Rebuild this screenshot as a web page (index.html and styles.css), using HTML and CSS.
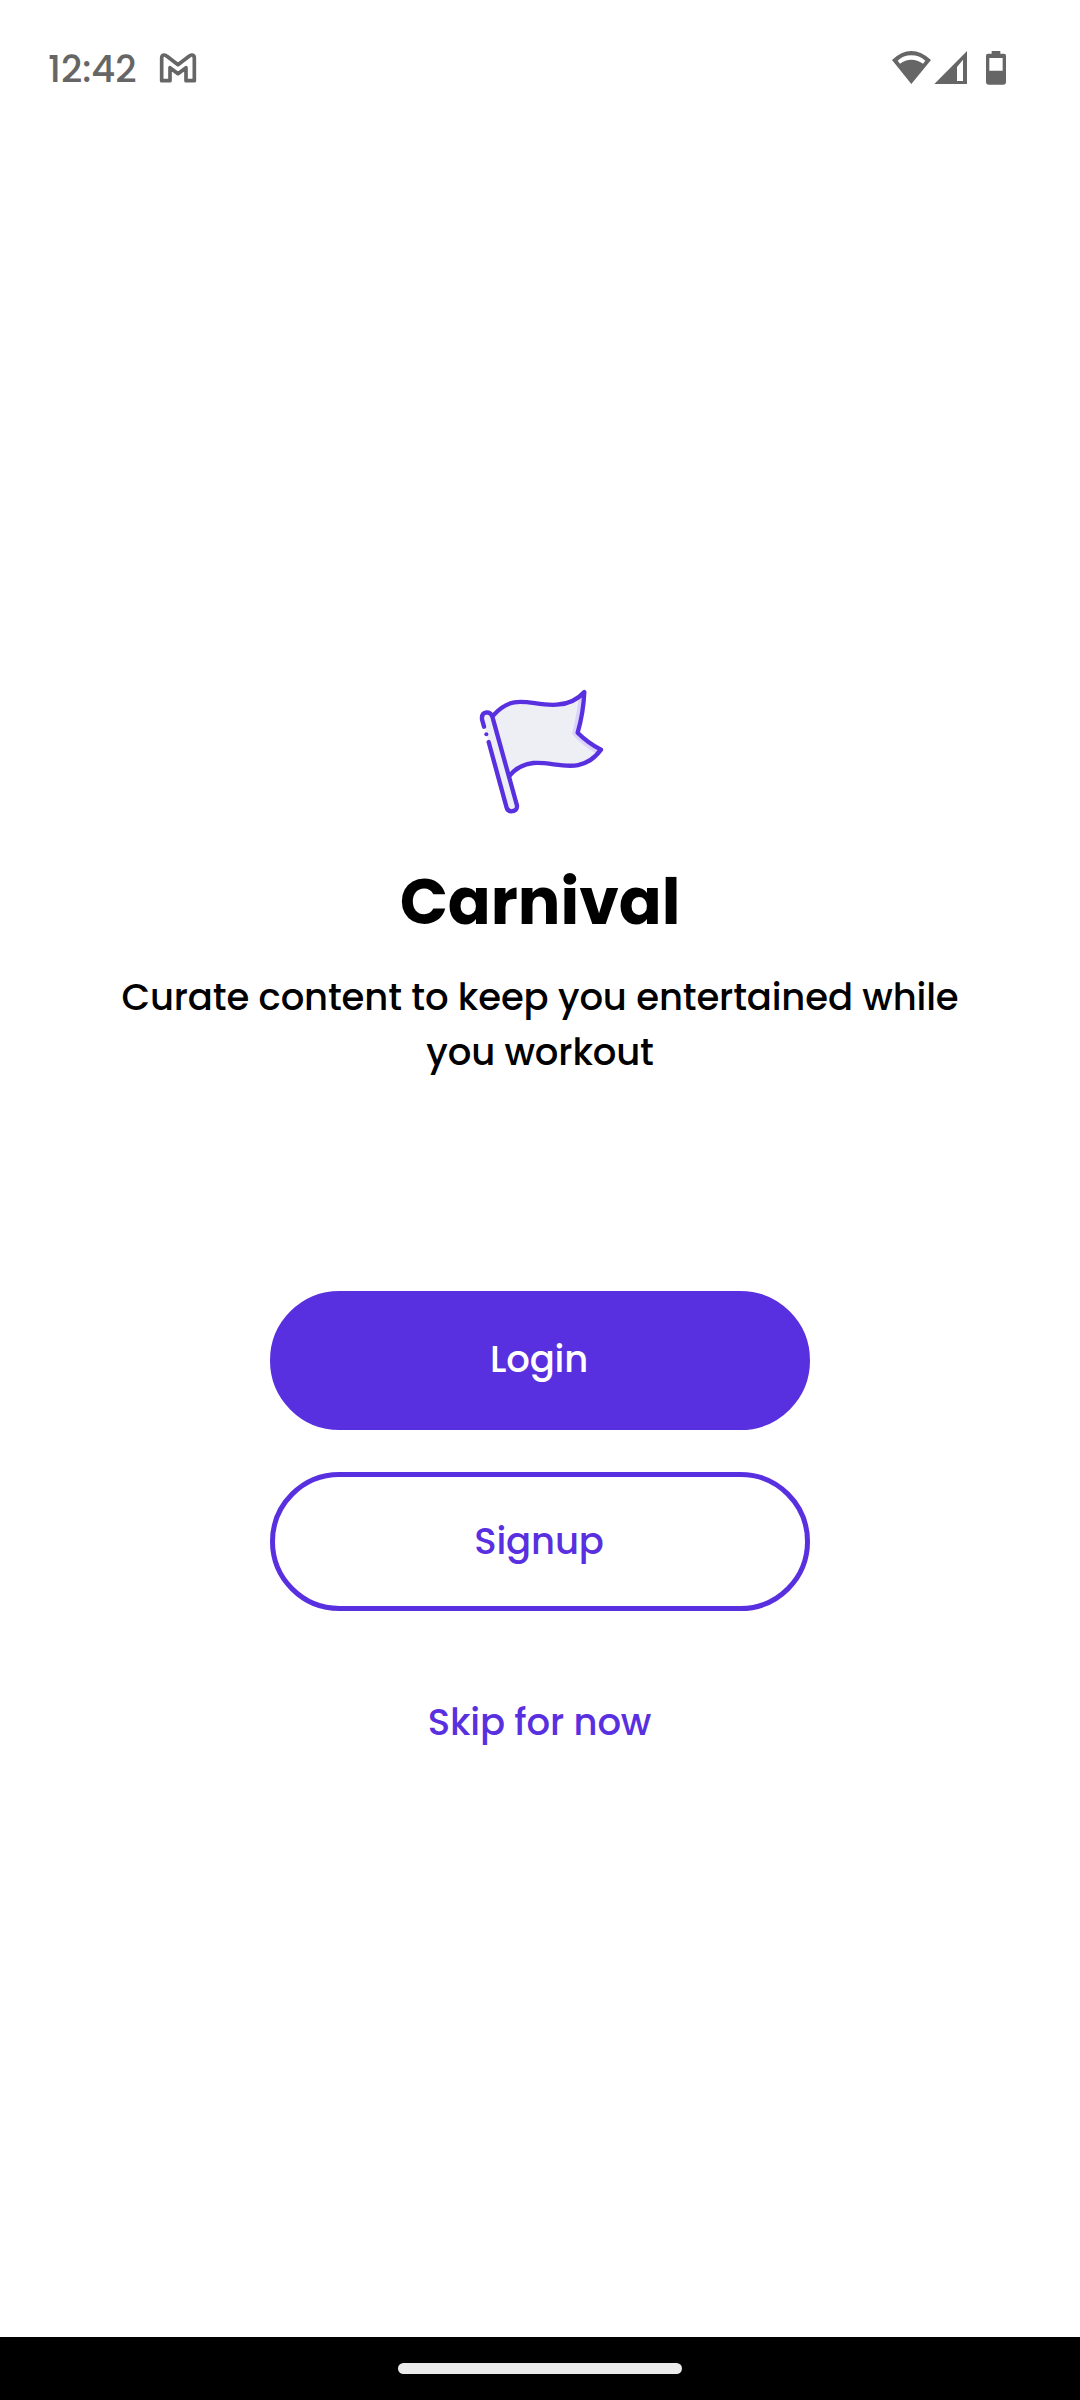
FILE: index.html
```html
<!DOCTYPE html>
<html lang="en">
<head>
<meta charset="utf-8">
<title>Carnival</title>
<link rel="stylesheet" href="styles.css">
</head>
<body>
<div class="screen">
  <header class="status">
    <div class="status-left">
      <span class="clock">12:42</span>
      <svg class="mail" viewBox="0 0 120 96" aria-hidden="true">
        <path d="M11 86V18Q11 9 19 9Q23 9 27 13L60 38L93 13Q97 9 101 9Q109 9 109 18V86H84V47L60 65L36 47V86Z"/>
      </svg>
    </div>
    <svg class="indicators" viewBox="0 0 420 180" aria-hidden="true">
      <path fill-rule="evenodd" d="M36 60Q64 33 94 33T153 60L94 132ZM53 62L60 71Q76 59 94 59T129 71L136 62Q118 46 94 46T53 62Z"/>
      <path fill-rule="evenodd" d="M163 132L261 33V132ZM231 81V123H249V59Z"/>
      <path fill-rule="evenodd" d="M335 33H361V41H372Q378 41 378 47V127Q378 134 371 134H325Q318 134 318 127V47Q318 41 324 41H335ZM328 54V92H368V54Z"/>
    </svg>
  </header>
  <main class="welcome">
    <svg class="flag" viewBox="0 0 480 480" aria-hidden="true">
      <path class="flag-fill" d="M101 135C164 65 215 110 290 104Q341 102 373 66Q370 130 353 188Q384 219 423 239C362 321 288 273 220 279Q175 284 149 317L171 405Q173 424 153 424Q141 424 138 408L66 145Q66 126 81 127Q94 127 97 140Z"/>
      <path class="flag-shade" d="M364 80Q356 140 344 190Q371 222 414 245"/>
      <path class="flag-line" d="M101 135C164 65 215 110 290 104Q341 102 373 66Q370 130 353 188Q384 219 423 239C362 321 288 273 220 279Q175 284 149 317"/>
      <path class="flag-line" d="M72 170L66 148Q64 129 80 127Q93 127 97 140L171 407Q172 424 153 424Q142 423 139 410L86 216"/>
      <circle class="flag-dot" cx="79" cy="193" r="6"/>
    </svg>
    <h1 class="title">Carnival</h1>
    <p class="tagline">Curate content to keep you entertained while<br>you workout</p>
    <div class="actions">
      <button class="button login">Login</button>
      <button class="button signup">Signup</button>
      <a class="skip">Skip for now</a>
    </div>
  </main>
  <footer class="navbar"><div class="handle"></div></footer>
</div>
</body>
</html>
```
FILE: styles.css
```css
* { box-sizing: border-box; }
body { margin: 0; background: #fff; font-family: Poppins, Inter, sans-serif; }
.screen { display: flex; flex-direction: column; width: 1080px; height: 2400px; }
.status { display: flex; justify-content: space-between; height: 100px; padding: 39px 60px 0 48px; }
.status-left { display: flex; }
.clock { width: 110px; font: 500 37px/60px "Google Sans", Poppins, sans-serif; color: #666; white-space: nowrap; }
.mail { width: 40px; height: 32px; margin-top: 13px; fill: none; stroke: #666; stroke-width: 11; stroke-linejoin: round; }
.indicators { width: 140px; height: 60px; margin-top: 1px; fill: #666; }
.welcome { display: flex; flex: 1; flex-direction: column; align-items: center; padding-top: 570px; }
.flag { width: 160px; height: 160px; }
.flag-fill { fill: #eeeff5; }
.flag-shade { fill: none; stroke: #dcd3fb; stroke-width: 14; }
.flag-line { fill: none; stroke: #5930df; stroke-width: 13; stroke-linecap: round; stroke-linejoin: round; }
.flag-dot { fill: #5930df; }
.title { margin: 32px 0 0; font-size: 63.25px; font-weight: 700; line-height: 80px; }
.tagline { margin: 28px 0 0; font-size: 37px; font-weight: 500; line-height: 55px; letter-spacing: -0.14px; text-align: center; white-space: nowrap; }
.actions { display: flex; flex-direction: column; align-items: center; margin-top: 211px; }
.button { width: 540px; height: 139px; border: 5.5px solid #5930df; border-radius: 70px; font: 500 37px/45px Poppins, Inter, sans-serif; letter-spacing: -0.14px; }
.login { padding: 0 2px 2px 0; background: #5930df; color: #fff; }
.signup { margin-top: 42px; padding: 0 2px 0 0; background: #fff; color: #5930df; }
.skip { margin-top: 83px; padding-right: 1px; font-size: 37px; font-weight: 500; line-height: 56px; letter-spacing: -0.14px; color: #5930df; }
.navbar { display: flex; justify-content: center; height: 63px; padding-top: 26px; background: #000; }
.handle { width: 284px; height: 11px; border-radius: 6px; background: #ebebeb; }
```
